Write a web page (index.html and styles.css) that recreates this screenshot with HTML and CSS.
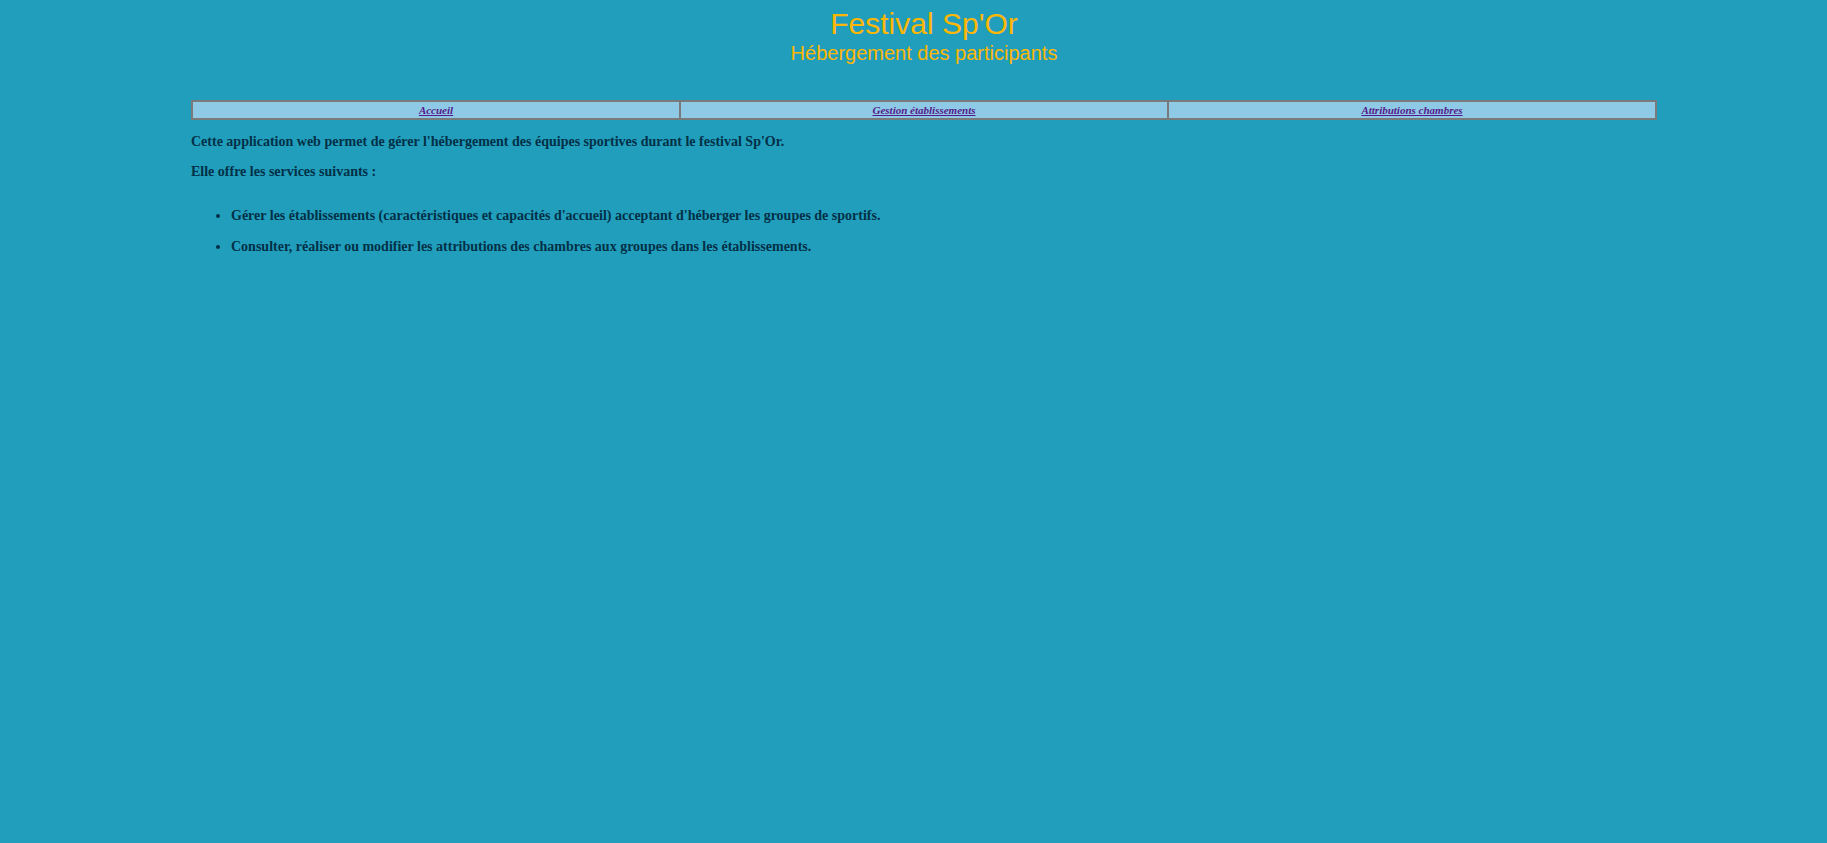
FILE: index.html
```html
<!DOCTYPE html>
<html lang="fr">
<head>
<meta charset="utf-8">
<title>Festival Sp'Or</title>
<link rel="stylesheet" href="styles.css">
</head>
<body>
<div class="page">
  <header class="header">
    <div class="title">Festival Sp'Or</div>
    <div class="subtitle">Hébergement des participants</div>
  </header>
  <table class="nav">
    <tr>
      <td><a href="#">Accueil</a></td>
      <td><a href="#">Gestion établissements</a></td>
      <td><a href="#">Attributions chambres</a></td>
    </tr>
  </table>
  <main class="content">
    <p>Cette application web permet de gérer l'hébergement des équipes sportives durant le festival Sp'Or.</p>
    <p>Elle offre les services suivants :</p>
    <ul class="services">
      <li>Gérer les établissements (caractéristiques et capacités d'accueil) acceptant d'héberger les groupes de sportifs.</li>
      <li>Consulter, réaliser ou modifier les attributions des chambres aux groupes dans les établissements.</li>
    </ul>
  </main>
</div>
</body>
</html>
```

FILE: styles.css
```css
html, body {
  margin: 0;
  padding: 0;
  background: #219ebc;
}

body {
  font-family: "Liberation Serif", "Times New Roman", serif;
  color: #023047;
}

.page {
  width: 1466px;
  margin-left: 191px;
}

.header {
  padding-top: 6px;
  text-align: center;
  color: #ffb703;
  font-family: "Liberation Sans", Arial, sans-serif;
}

.title {
  font-size: 30px;
  line-height: 35px;
}

.subtitle {
  margin-top: 1px;
  font-size: 20px;
  line-height: 23px;
}

.nav {
  margin-top: 35px;
  width: 100%;
  border-collapse: separate;
  border-spacing: 0;
  border: 1px solid #7a7a7a;
  table-layout: fixed;
}

.nav td {
  width: 33.333%;
  background: #8ecae6;
  border: 1px solid #7a7a7a;
  padding: 1px;
  text-align: center;
  font-size: 11px;
  line-height: 14px;
  font-style: italic;
  font-weight: bold;
}

.nav a {
  color: #551a8b;
  text-decoration: underline;
}

.content {
  font-size: 14px;
  font-weight: bold;
  line-height: 16px;
}

.content p {
  margin: 14px 0;
}

.services {
  margin: 28px 0 0;
  padding-left: 40px;
}

.services li {
  margin-bottom: 15px;
}
```
